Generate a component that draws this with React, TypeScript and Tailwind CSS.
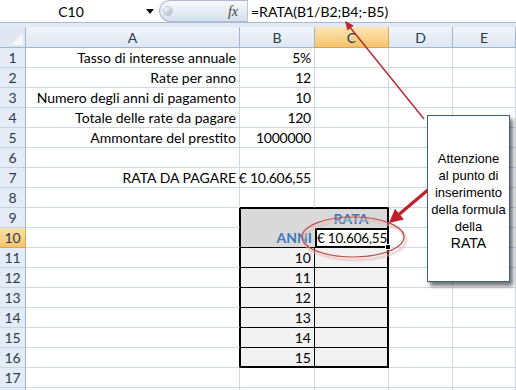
import React from "react";

const FONT = "font-['Lato','Liberation_Sans',sans-serif]";

const cellBase = "h-5 flex items-center whitespace-nowrap px-[3px] text-[14px] text-black";
const grid = "border-r border-b border-[#d0d7e5]";

type RowDef = { a?: string; b?: string };

const top: RowDef[] = [
  { a: "Tasso di interesse annuale", b: "5%" },
  { a: "Rate per anno", b: "12" },
  { a: "Numero degli anni di pagamento", b: "10" },
  { a: "Totale delle rate da pagare", b: "120" },
  { a: "Ammontare del prestito", b: "1000000" },
  {},
  { a: "RATA DA PAGARE", b: "€ 10.606,55" },
];

function RowHeader({ n, active }: { n?: number; active?: boolean }) {
  return (
    <div
      className={
        active
          ? "h-5 flex items-center justify-center text-[14px] text-[#2b3a4c] bg-gradient-to-b from-[#fbe2a9] to-[#f5c46a] border-r border-b border-[#d9a64e]"
          : "h-5 flex items-center justify-center text-[14px] text-[#2b3a4c] bg-[#e4ecf7] border-r border-[#9eb6ce] border-b border-b-[#c5d3e4]"
      }
    >
      {n}
    </div>
  );
}

function ColHeader({ l, active }: { l: string; active?: boolean }) {
  return (
    <div
      className={
        active
          ? "h-[21px] flex items-center justify-center text-[14px] text-[#2b3a4c] bg-gradient-to-b from-[#fce6b5] to-[#f4c368] border-r border-b border-[#d9a64e]"
          : "h-[21px] flex items-center justify-center text-[14px] text-[#2b3a4c] bg-gradient-to-b from-[#f1f5fa] to-[#dde6f1] border-r border-b border-[#9eb6ce]"
      }
    >
      {l}
    </div>
  );
}

export default function App() {
  const rows: React.ReactNode[] = [];

  top.forEach((r, i) => {
    const n = i + 1;
    rows.push(<RowHeader key={`h${n}`} n={n} />);
    rows.push(
      <div key={`a${n}`} className={`${cellBase} ${grid} justify-end`}>
        {r.a}
      </div>
    );
    rows.push(
      <div key={`b${n}`} className={`${cellBase} ${grid} justify-end px-[2px] tracking-[-0.25px]`}>
        {r.b}
      </div>
    );
    rows.push(<div key={`c${n}`} className={`${cellBase} ${grid}`} />);
    rows.push(<div key={`d${n}`} className={`${cellBase} ${grid}`} />);
    rows.push(<div key={`e${n}`} className={`${cellBase} ${grid}`} />);
  });

  // row 8
  rows.push(<RowHeader key="h8" n={8} />);
  rows.push(<div key="a8" className={`${cellBase} ${grid}`} />);
  rows.push(<div key="b8" className={`${cellBase} border-r border-[#d0d7e5] border-b border-b-black`} />);
  rows.push(<div key="c8" className={`${cellBase} border-r border-[#d0d7e5] border-b border-b-black`} />);
  rows.push(<div key="d8" className={`${cellBase} ${grid}`} />);
  rows.push(<div key="e8" className={`${cellBase} ${grid}`} />);

  // row 9
  rows.push(<RowHeader key="h9" n={9} />);
  rows.push(<div key="a9" className={`${cellBase} border-b border-[#d0d7e5] border-r border-r-black`} />);
  rows.push(<div key="b9" className={`${cellBase} bg-[#d9d9d9] border-l border-t border-black`} />);
  rows.push(
    <div key="c9" className={`${cellBase} bg-[#d9d9d9] border-t border-r-2 border-black justify-center font-bold`}>
      <span className="text-[#3b78c0]">RATA</span>
    </div>
  );
  rows.push(<div key="d9" className={`${cellBase} ${grid}`} />);
  rows.push(<div key="e9" className={`${cellBase} ${grid}`} />);

  // row 10
  rows.push(<RowHeader key="h10" n={10} active />);
  rows.push(<div key="a10" className={`${cellBase} border-b border-[#d0d7e5] border-r border-r-black`} />);
  rows.push(
    <div key="b10" className={`${cellBase} bg-[#d9d9d9] border-l border-b border-black justify-end font-bold px-[1px]`}>
      <span className="text-[#3b78c0]">ANNI</span>
    </div>
  );
  rows.push(
    <div key="c10" className={`h-5 flex items-center whitespace-nowrap text-[13.5px] tracking-[-0.2px] text-black relative bg-white border-2 border-black justify-center px-0`}>
      € 10.606,55
      <span className="absolute -right-[4px] -bottom-[4px] w-[6px] h-[6px] bg-black border border-white" />
    </div>
  );
  rows.push(<div key="d10" className={`${cellBase} ${grid}`} />);
  rows.push(<div key="e10" className={`${cellBase} ${grid}`} />);

  // rows 11-16
  for (let n = 11; n <= 16; n++) {
    const last = n === 16;
    rows.push(<RowHeader key={`h${n}`} n={n} />);
    rows.push(<div key={`a${n}`} className={`${cellBase} border-b border-[#d0d7e5] border-r border-r-black`} />);
    rows.push(
      <div
        key={`b${n}`}
        className={
          last
            ? `${cellBase} bg-[#f2f2f2] border-l border-r border-b-2 border-black justify-end px-[2px]`
            : `${cellBase} bg-[#f2f2f2] border-l border-r border-b border-black justify-end px-[2px]`
        }
      >
        {n - 1}
      </div>
    );
    rows.push(
      <div
        key={`c${n}`}
        className={
          last
            ? `${cellBase} bg-[#f2f2f2] border-r-2 border-b-2 border-black`
            : `${cellBase} bg-[#f2f2f2] border-r-2 border-b border-black`
        }
      />
    );
    rows.push(<div key={`d${n}`} className={`${cellBase} ${grid}`} />);
    rows.push(<div key={`e${n}`} className={`${cellBase} ${grid}`} />);
  }

  // row 17
  rows.push(<RowHeader key="h17" n={17} />);
  for (const c of ["a", "b", "c", "d", "e"]) {
    rows.push(<div key={`${c}17`} className={`${cellBase} ${grid}`} />);
  }
  rows.push(<RowHeader key="h18" />);
  for (const c of ["a", "b", "c", "d", "e"]) {
    rows.push(<div key={`${c}18`} className={`${cellBase} ${grid}`} />);
  }

  return (
    <div className={`relative w-[516px] h-[390px] overflow-hidden bg-white ${FONT}`}>
      {/* formula bar */}
      <div className="h-[23px] flex bg-white border-b border-[#a9bbd2]">
        <div className="w-[142px] flex items-center justify-center text-[14px] text-black">C10</div>
        <div className="w-[16px] flex items-center justify-center">
          <svg width="8" height="5" viewBox="0 0 8 5">
            <path d="M0 0 L8 0 L4 5 Z" fill="#111" />
          </svg>
        </div>
        <div className="ml-[1px] w-[88px] h-[22px] rounded-l-full border border-r-0 border-[#aabdd5] bg-gradient-to-b from-[#f8fafd] to-[#d6e0ec] flex items-center justify-between pl-[3px] pr-[9px]">
          <span className="w-[10px] h-[10px] rounded-full bg-gradient-to-br from-[#ffffff] to-[#a9b3bf] border border-[#c2cad4]" />
          <span className="italic font-['Liberation_Serif',serif] text-[14px] text-[#444]">fx</span>
        </div>
        <div className="w-px bg-[#b7c6d9]" />
        <div className="flex-1 flex items-center pl-[3px] text-[14px] text-black">=RATA(B1/B2;B4;-B5)</div>
      </div>
      <div className="h-[4px] bg-[#e3eaf3]" />

      {/* sheet grid */}
      <div className="grid grid-cols-[26px_214px_75px_74px_64px_63px]">
        <div className="h-[21px] relative bg-[#dfe7f2] border-r border-b border-[#9eb6ce]">
          <svg className="absolute right-[2px] bottom-[2px]" width="12" height="12" viewBox="0 0 12 12">
            <path d="M12 0 L12 12 L0 12 Z" fill="#f4f7fb" />
          </svg>
        </div>
        <ColHeader l="A" />
        <ColHeader l="B" />
        <ColHeader l="C" active />
        <ColHeader l="D" />
        <ColHeader l="E" />
        {rows}
      </div>

      {/* annotations overlay */}
      <svg className="absolute left-0 top-0 pointer-events-none" width="516" height="390" viewBox="0 0 516 390">
        <ellipse cx="354" cy="238" rx="51" ry="20" fill="none" stroke="#e6b9b8" strokeWidth="3" opacity="0.5" transform="translate(1 2)" />
        <ellipse cx="353" cy="237" rx="51" ry="20" fill="none" stroke="#c0504d" strokeWidth="1.2" />
        {/* thin arrow to formula */}
        <line x1="424" y1="119" x2="350.6" y2="28" stroke="#b8282e" strokeWidth="1.4" />
        <polygon points="345,21 353.7,25.5 347.5,30.5" fill="#b8282e" />
        {/* thick arrow to C10 */}
        <line x1="429" y1="189" x2="399.2" y2="214.3" stroke="#c0202a" strokeWidth="3.2" />
        <polygon points="389,223 404,219.5 395,208.8" fill="#c0202a" />
      </svg>

      {/* callout */}
      <div className="absolute left-[427px] top-[115px] w-[83px] h-[167px] bg-white border border-[#3e5f86] shadow-[3px_4px_4px_rgba(0,0,0,0.55)] flex items-center justify-center">
        <div className="text-center text-[13px] leading-[17px] text-black font-['Liberation_Sans',sans-serif] pt-[4px]">
          Attenzione
          <br />
          al punto di
          <br />
          inserimento
          <br />
          della formula
          <br />
          della
          <br />
          <span className="text-[14px]">RATA</span>
        </div>
      </div>
    </div>
  );
}
